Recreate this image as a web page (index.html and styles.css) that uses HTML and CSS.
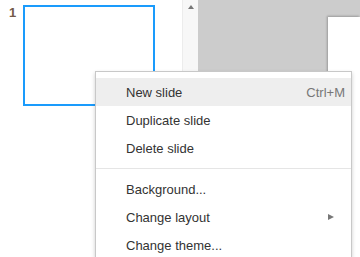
FILE: index.html
```html
<!DOCTYPE html>
<html>
<head>
<meta charset="utf-8">
<link rel="stylesheet" href="styles.css">
</head>
<body>
<div class="app">
  <div class="filmstrip">
    <div class="slide-entry">
      <span class="slide-num">1</span>
      <div class="thumb"></div>
    </div>
  </div>
  <div class="scrollbar">
    <span class="arrow-up"></span>
  </div>
  <div class="canvas">
    <div class="page"></div>
  </div>
</div>
<div class="menu">
  <div class="item active"><span class="label">New slide</span><span class="shortcut">Ctrl+M</span></div>
  <div class="item"><span class="label">Duplicate slide</span></div>
  <div class="item"><span class="label">Delete slide</span></div>
  <div class="sep"></div>
  <div class="item"><span class="label">Background...</span></div>
  <div class="item"><span class="label">Change layout</span><span class="submenu"></span></div>
  <div class="item"><span class="label">Change theme...</span></div>
</div>
</body>
</html>
```

FILE: styles.css
```css
html, body {
  margin: 0;
  padding: 0;
  width: 360px;
  height: 257px;
  overflow: hidden;
  font-family: "Liberation Sans", Arial, sans-serif;
  background: #fff;
}
.app {
  display: flex;
  height: 257px;
}
.filmstrip {
  width: 182px;
  background: #fff;
}
.slide-entry {
  display: flex;
  padding: 5px 0 0 9px;
}
.slide-num {
  font-size: 13px;
  font-weight: bold;
  color: #735a48;
  width: 14px;
  line-height: 13px;
  margin-top: 1px;
}
.thumb {
  width: 128px;
  height: 97px;
  border: 2px solid #1a9bfc;
  background: #fff;
}
.scrollbar {
  width: 16px;
  background: #f7f7f7;
  border-left: 1px solid #ececec;
  display: flex;
  justify-content: center;
  padding-top: 5px;
  box-sizing: border-box;
}
.arrow-up {
  width: 0;
  height: 0;
  border-left: 3px solid transparent;
  border-right: 3px solid transparent;
  border-bottom: 4px solid #777;
}
.canvas {
  flex: 1;
  background: #cccccc;
  padding: 17px 0 0 130px;
  box-sizing: border-box;
  overflow: hidden;
}
.page {
  height: 240px;
  background: #fff;
  box-shadow: -1px -1px 2px rgba(0,0,0,0.25);
}
.menu {
  position: absolute;
  left: 95px;
  top: 71px;
  width: 257px;
  height: 186px;
  overflow: hidden;
  background: #fff;
  border: 1px solid #c8c8c8;
  border-bottom: 0;
  box-shadow: 0 2px 4px rgba(0,0,0,0.2);
  padding-top: 6px;
  box-sizing: border-box;
}
.item {
  height: 28px;
  display: flex;
  align-items: center;
  padding: 0 6px 0 30px;
  font-size: 13px;
  color: #333;
}
.item.active {
  background: #eeeeee;
}
.label {
  flex: 1;
}
.shortcut {
  color: #777;
}
.submenu {
  width: 0;
  height: 0;
  border-top: 3px solid transparent;
  border-bottom: 3px solid transparent;
  border-left: 6px solid #777;
  margin-right: 11px;
}
.sep {
  height: 1px;
  background: #e5e5e5;
  margin: 6px 0;
}
```
